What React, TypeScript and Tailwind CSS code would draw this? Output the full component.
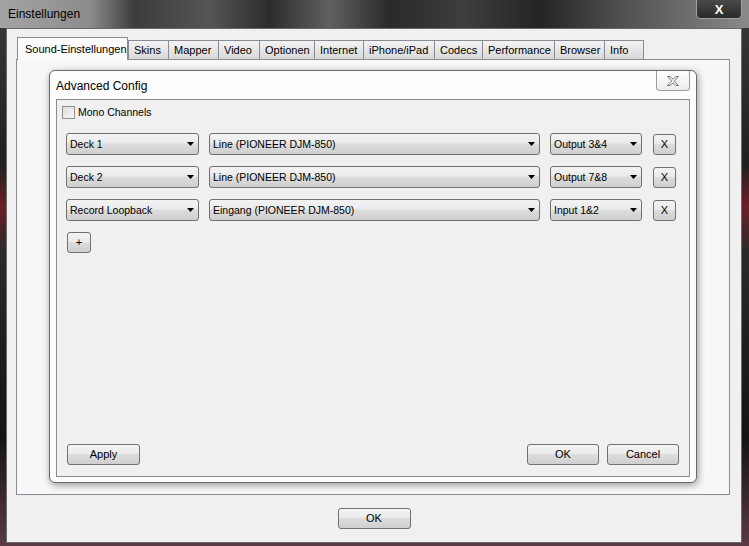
import type { ReactNode } from "react";

const TABS = [
  { label: "Skins", w: "w-[40px]" },
  { label: "Mapper", w: "w-[50px]" },
  { label: "Video", w: "w-[41px]" },
  { label: "Optionen", w: "w-[55px]" },
  { label: "Internet", w: "w-[49px]" },
  { label: "iPhone/iPad", w: "w-[71px]" },
  { label: "Codecs", w: "w-[48px]" },
  { label: "Performance", w: "w-[72px]" },
  { label: "Browser", w: "w-[50px]" },
  { label: "Info", w: "w-[40px] border-r" },
];

const ROWS = [
  { source: "Deck 1", device: "Line (PIONEER DJM-850)", channel: "Output 3&4" },
  { source: "Deck 2", device: "Line (PIONEER DJM-850)", channel: "Output 7&8" },
  { source: "Record Loopback", device: "Eingang (PIONEER DJM-850)", channel: "Input 1&2" },
];

const bevel =
  "border border-[#707070] bg-[linear-gradient(#f3f3f3,#ebebeb_45%,#dddddd_50%,#cfcfcf)] text-[11px] text-black";

function Combo({ label, className }: { label: string; className: string }) {
  return (
    <div className={`flex h-[22px] items-center justify-between rounded-[3px] pl-[3px] pr-[4px] ${bevel} ${className}`}>
      <span className="text-[10.5px] leading-none">{label}</span>
      <svg width="7" height="4" viewBox="0 0 7 4">
        <path d="M0 0H7L3.5 4Z" fill="#000" />
      </svg>
    </div>
  );
}

function Button({ children, className }: { children: ReactNode; className: string }) {
  return (
    <div className={`flex h-[21px] items-center justify-center rounded-[3px] ${bevel} ${className}`}>
      {children}
    </div>
  );
}

export default function App() {
  return (
    <div className="flex h-[546px] w-[749px] flex-col overflow-hidden bg-[linear-gradient(180deg,#3a3a3a,#202020_30%,#6b1f26_38%,#2a2a2a_46%,#141414_80%,#5a3a44)] font-['Liberation_Sans',Arial,sans-serif]">
      {/* title bar */}
      <div className="flex h-[28px] shrink-0 items-start bg-[linear-gradient(90deg,#a4a4a4,#8c8c8c_12%,#3c3c3c_18%,#555_28%,#2c2c2c_36%,#606060_44%,#2a2a2a_52%,#3e3e3e_62%,#242424_72%,#4c4c4c_82%,#6e6e6e_92%,#8a8a8a)]">
        <span className="pl-[8px] pt-[6px] text-[12px] leading-[16px] text-black">Einstellungen</span>
        <div className="flex-1" />
        <div className="mr-[7px] flex h-[19px] w-[46px] items-center justify-center rounded-b-[5px] border border-t-0 border-[#a0a0a0] bg-[linear-gradient(#4a4a4a,#2a2a2a)] text-[13px] font-bold leading-none text-white">
          X
        </div>
      </div>

      {/* client */}
      <div className="mb-[3px] ml-[6px] mr-[7px] flex flex-1 flex-col border border-[#6a6a6a] bg-[#f0f0f0]">
        <div className="relative z-10 flex h-[31px] items-end pl-[10px]">
          <div className="flex h-[23px] w-[111px] items-start border border-b-0 border-[#898c95] bg-[#fbfbfb] pl-[7px] pt-[3px] text-[11px] text-black">
            Sound-Einstellungen
          </div>
          {TABS.map((t) => (
            <div
              key={t.label}
              className={`mb-px flex h-[19px] items-center border-l border-t border-[#898c95] bg-[linear-gradient(#f4f4f4,#e6e6e6_50%,#d8d8d8)] pl-[5px] text-[11px] text-black ${t.w}`}
            >
              {t.label}
            </div>
          ))}
        </div>

        <div className="-mt-px ml-[9px] mr-[11px] flex h-[436px] flex-col border border-[#898c95] bg-[#f7f7f7] pl-[32px] pr-[32px] pt-[10px]">
          {/* Advanced Config dialog */}
          <div className="flex h-[413px] flex-col rounded-[6px] border border-[#6a6a6a] bg-[#fdfdfd] shadow-[1px_2px_7px_rgba(0,0,0,0.4)]">
            <div className="flex h-[28px] shrink-0 items-start">
              <span className="pl-[6px] pt-[7px] text-[12px] leading-[16px] text-black">Advanced Config</span>
              <div className="flex-1" />
              <div className="mr-[6px] flex h-[20px] w-[34px] items-center justify-center rounded-b-[4px] border border-t-0 border-[#9a9a9a] bg-[linear-gradient(#ffffff,#ececec)]">
                <svg width="12" height="10" viewBox="0 0 12 10">
                  <path
                    d="M0.5 0.5H3.2L6 3.3L8.8 0.5H11.5L7.4 5L11.5 9.5H8.8L6 6.7L3.2 9.5H0.5L4.6 5Z"
                    fill="#f2f2f2"
                    stroke="#6a6a6a"
                    strokeWidth="0.9"
                    strokeLinejoin="round"
                  />
                </svg>
              </div>
            </div>

            <div className="mx-[6px] flex h-[378px] flex-col border border-[#8e8e8e] bg-[#f0f0f0]">
              <div className="flex items-center gap-[3px] pl-[5px] pt-[5px]">
                <div className="h-[13px] w-[13px] border border-[#8f8f8f] bg-[linear-gradient(135deg,#dcdcdc,#f8f8f8)]" />
                <span className="text-[10.5px] leading-[14px] text-black">Mono Channels</span>
              </div>

              <div className="mt-[14px] flex flex-col gap-[11px] pl-[9px]">
                {ROWS.map((r) => (
                  <div key={r.source} className="flex items-center">
                    <Combo label={r.source} className="w-[133px]" />
                    <Combo label={r.device} className="ml-[10px] w-[331px]" />
                    <Combo label={r.channel} className="ml-[10px] w-[92px]" />
                    <Button className="ml-[11px] h-[20px] w-[23px] text-[#333]">X</Button>
                  </div>
                ))}
              </div>

              <div className="mt-[11px] pl-[10px]">
                <Button className="w-[24px]">+</Button>
              </div>

              <div className="flex-1" />

              <div className="flex items-center pb-[11px] pl-[10px] pr-[10px]">
                <Button className="w-[73px]">Apply</Button>
                <div className="flex-1" />
                <Button className="w-[72px]">OK</Button>
                <Button className="ml-[8px] w-[72px]">Cancel</Button>
              </div>
            </div>
          </div>
        </div>

        <div className="flex justify-center pt-[13px]">
          <Button className="w-[73px]">OK</Button>
        </div>
      </div>
    </div>
  );
}
